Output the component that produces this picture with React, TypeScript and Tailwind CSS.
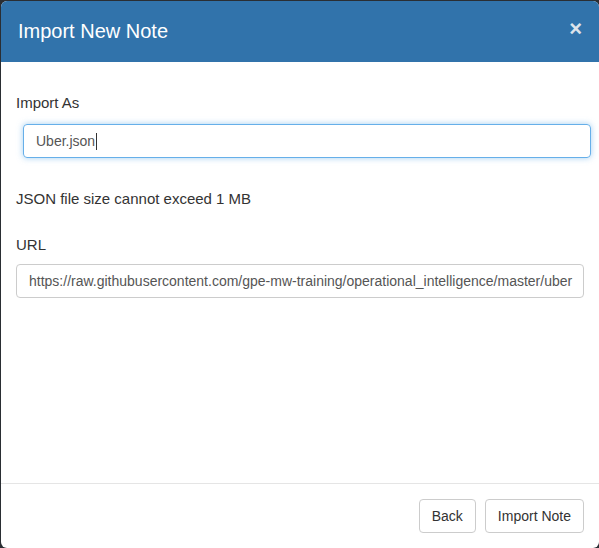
import React from "react";

export default function App() {
  return (
    <div
      className="w-[599px] h-[548px] bg-[#2a2e33] overflow-hidden"
      style={{ fontFamily: '"Liberation Sans", Arial, sans-serif' }}
    >
      <div className="ml-[1px] mt-[1px] w-[598px] h-[547px] bg-white rounded-[6px] flex flex-col overflow-hidden">
        <div className="h-[61px] bg-[#3173ab] flex items-center justify-between pl-[17px] pr-[17px] shrink-0">
          <h4 className="text-[20px] leading-[25px] text-white">Import New Note</h4>
          <span className="text-[22px] font-bold leading-none text-[#dde3ea] -mt-[6px]">×</span>
        </div>
        <div className="flex-1 px-[15px] text-[#333] text-[15px]">
          <div className="mt-[31px] leading-[20px]">Import As</div>
          <div className="mt-[11px] ml-[7px] w-[568px] h-[34px] rounded-[4px] border border-[#66afe9] shadow-[0_0_6px_rgba(102,175,233,0.6)] flex items-center px-[12px] text-[14px] text-[#555]">
            Uber.json<span className="inline-block w-px h-[17px] bg-[#333] ml-[1px]" />
          </div>
          <div className="mt-[31px] leading-[20px]">JSON file size cannot exceed 1 MB</div>
          <div className="mt-[26px] leading-[20px]">URL</div>
          <div className="mt-[9px] w-[568px] h-[34px] rounded-[4px] border border-[#ccc] flex items-center px-[12px] text-[14px] text-[#555] overflow-hidden whitespace-nowrap">
            https://raw.githubusercontent.com/gpe-mw-training/operational_intelligence/master/uber
          </div>
        </div>
        <div className="h-[65px] border-t border-[#e5e5e5] flex items-start justify-end gap-[9px] pt-[15px] pr-[15px] shrink-0">
          <button className="h-[34px] px-[12px] border border-[#ccc] rounded-[4px] bg-white text-[14px] text-[#333]">Back</button>
          <button className="h-[34px] px-[12px] border border-[#ccc] rounded-[4px] bg-white text-[14px] text-[#333]">Import Note</button>
        </div>
      </div>
    </div>
  );
}
